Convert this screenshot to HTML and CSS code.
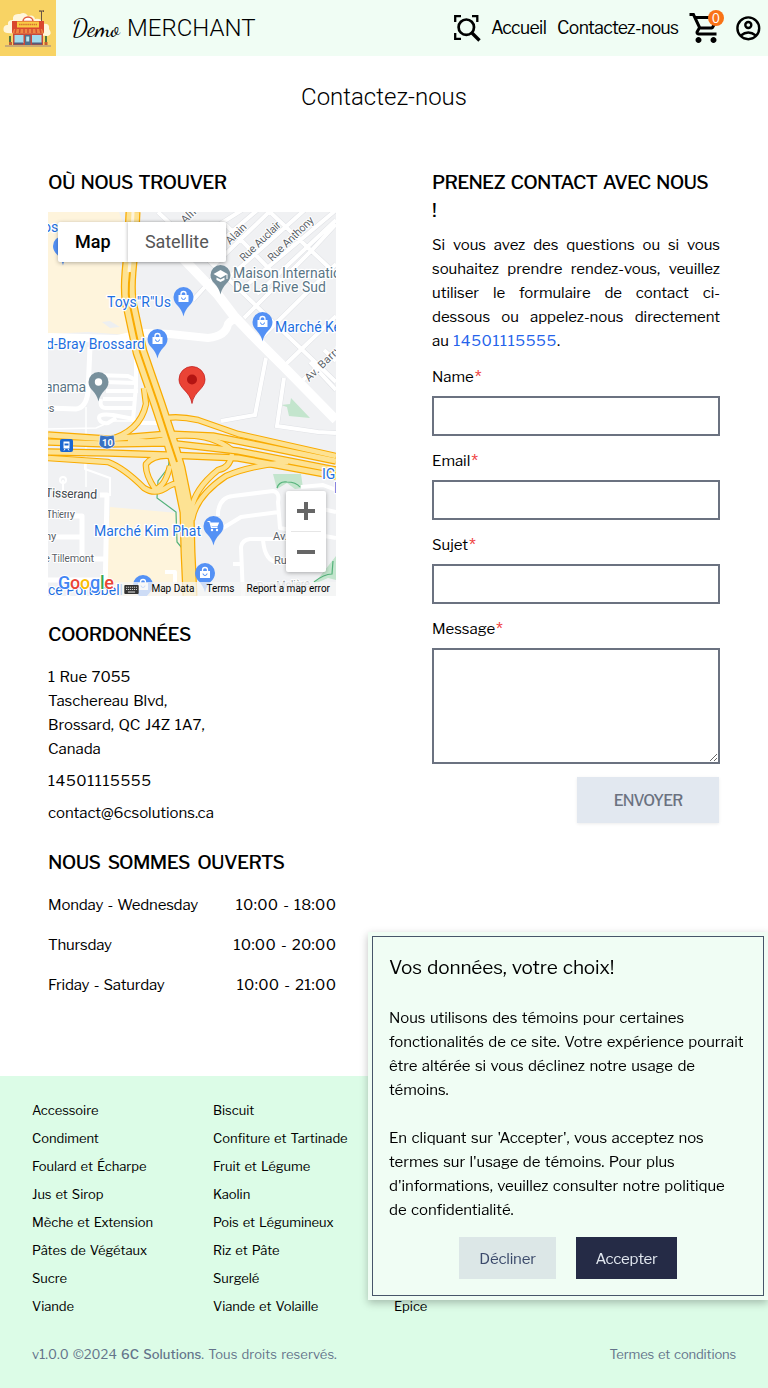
FILE: index.html
```html
<!DOCTYPE html>
<html lang="fr">
<head>
<meta charset="utf-8">
<title>Contactez-nous</title>
<link rel="stylesheet" href="styles.css">
</head>
<body>
<header class="nav">
  <svg class="logo" viewBox="0 0 56 56">
    <rect width="56" height="56" fill="#f8d364"/>
    <path d="M7 33a4 4 0 0 1 1-8q-1-5 5-5-1-7 7-6 5-3 8 2 6-2 7 3 7-1 8 5 7-1 6 5 4 5-1 7z" fill="#fff6dc"/>
    <path d="M41.500 24V11M39 11h5M40 12v-1.500M43.500 12v-1.500" stroke="#6a5444" fill="none"/>
    <path d="M23 21.500a5 4.500 0 0 1 10 0z" fill="#fff" stroke="#e45a3a" stroke-width="1.500"/>
    <path d="M12 21h32v12H12z" fill="#d9472f"/>
    <path d="M17 21.500h22v6H17z" fill="#f9cb45"/>
    <path d="M19 24.500h18" stroke="#d8722e" stroke-width="1.600" stroke-dasharray="1.500 .6"/>
    <path d="M13 45V32h30v13z" fill="#c84a3b"/>
    <path d="M14.500 35h9v8h-9zM32 35h9.500v8H32z" fill="#a3dced"/>
    <path d="M25 35h5.500v10H25z" fill="#4e6f8c"/><path d="M26.200 36.500h3v5h-3z" fill="#b7e6ee"/>
    <path d="M14 29h28l2 4.500H12z" fill="#ee8744"/>
    <path d="M16 29l-1 4M20 29l-.5 4M24 29v4M28 29v4M32 29v4M36 29l.5 4M40 29l1 4" stroke="#d34d31" stroke-width="1.500"/>
    <path d="M10 36v6M46 36v6" stroke="#4e7442" stroke-width="2"/>
    <path d="M9 42h3v3H9zM44.500 42h3v3h-3z" fill="#c45e33"/>
    <path d="M14 42.500h9v2h-9zM32 42.500h10v2H32z" fill="#545d79"/>
    <path d="M5 46h46" stroke="#b99d78" stroke-width="1.500"/>
  </svg>
  <div class="brand"><span class="brand-script">Demo</span><span class="brand-name">MERCHANT</span></div>
  <nav class="menu">
    <svg class="ico-search" viewBox="0 0 28 28" fill="none" stroke="#000" stroke-width="2.300">
      <path d="M2.200 8V2.200H8M19 2.200h5.300V8M2.200 19v5.800H8"/>
      <circle cx="13.300" cy="13.200" r="7.700" stroke-width="2.700"/><path d="M18.500 18.500l8 8" stroke-width="3.300"/>
    </svg>
    <a class="m-home">Accueil</a>
    <a class="m-contact">Contactez-nous</a>
    <div class="cart">
      <svg viewBox="0 0 24 24" width="36" height="36"><path d="M15.550 13c.75 0 1.410-.41 1.750-1.030l3.580-6.490A.996.996 0 0 0 20.010 4H5.210l-.94-2H1v2h2l3.600 7.590-1.350 2.440C4.520 15.370 5.480 17 7 17h12v-2H7l1.100-2h7.450zM6.160 6h12.150l-2.760 5H8.530L6.160 6zM7 18c-1.100 0-1.990.9-1.990 2S5.900 22 7 22s2-.9 2-2-.9-2-2-2zm10 0c-1.100 0-1.990.9-1.990 2s.89 2 1.990 2 2-.9 2-2-.9-2-2-2z"/></svg>
      <span class="badge">0</span>
    </div>
    <svg class="ico-user" viewBox="0 0 28 28" fill="none" stroke="#000" stroke-width="2.400"><circle cx="14.300" cy="14.300" r="10.900"/><circle cx="14.300" cy="11" r="3"/><path d="M6.800 21.500q7.500-6 15 0"/></svg>
  </nav>
</header>

<h1 class="title">Contactez-nous</h1>

<main class="cols">
  <section class="col">
    <h2 class="h h-find">OÙ NOUS TROUVER</h2>
    <div class="map">
      <svg class="map-svg" viewBox="0 0 288 384">
        <defs>
          <path id="streets" d="M110 0L288 170M148 27L210 -12M160 40L240 -28M175 10L195 30L232 68M222 0L288 62M165 54L250 -28M178 68L288 -30M145 88L165 66M200 72L288 -2M209 82L288 8M196 106L262 40L288 12M215 124L288 52M238 152L288 104M255 168L288 138M262 150L288 178M276 138L288 149M120 14L150 46M218 146L207 203 173 209M236 166L229 214 270 220 288 221"/>
          <path id="ramps" d="M60 228Q92 220 98 192L96 176M118 206Q132 204 150 208L190 222 288 244M0 246L60 250Q76 256 96 276Q108 284 121 274Q132 268 134 276M122 254Q117 275 107 277Q97 262 98 252Q106 242 124 244M143 310Q140 282 170 258 182 256 184 242M144 308Q148 284 178 264 200 254 240 250M80 228Q110 232 126 224 160 220 184 238"/>
          <path id="lanes" d="M0 223L60 227 120 222 165 224 210 233 288 249M0 230L60 232 120 231 190 239 288 258M0 240L60 241 120 243 190 246 288 264"/>
          <path id="trunk" d="M85 0Q84 30 81 60 79 84 83 98L92 140 110 192 122 228 130 256 139 300 140 340 142 384"/>
          <path id="pin" d="M0 19.500C-2 9-10 8-10 0A10 10 0 0 1 10 0C10 8 2 9 0 19.500z"/>
          <g id="shop"><use href="#pin" fill="#5491f5"/><path d="M-5-2H5V5H-5z" fill="#fff"/><path d="M-2.500-1v-2a2.500 2.500 0 0 1 5 0v2" fill="none" stroke="#fff" stroke-width="1.300"/><path d="M-2 .5a2 2 0 0 0 4 0" fill="none" stroke="#5491f5"/></g>
        </defs>
        <rect width="288" height="384" fill="#f0f1f3"/>
        <path d="M0 0h71l4 10-3 50 8 63-40-3-40 2z" fill="#fef4dc"/>
        <path d="M62 295l68 6 5 83H57z" fill="#fef4dc"/>
        <path d="M54 110l8-1 10 6-10 1z" fill="#edeff1"/>
        <path d="M243 186l19 20-21-2-2-9-6-2 9-1zM225 262h28l2 14-8 1-8-6-10 6zM266 372l22-28v24l-8-2z" fill="#c3e5cd"/>
        <use href="#streets" fill="none" stroke="#dfe1e5" stroke-width="5"/>
        <use href="#streets" fill="none" stroke="#fff" stroke-width="4"/>
        <g fill="none" stroke="#fff" stroke-linejoin="round">
          <path d="M104 14L170 83 186 104 204 123 236 155 288 208" stroke-width="9.500"/>
          <path d="M0 125L70 127 97 121 122 122 160 126Q178 124 180 112Q184 106 192 108" stroke-width="8"/>
          <path d="M42 135L40 180Q38 196 28 197L0 196" stroke-width="5"/>
          <path d="M38 195v80" stroke-width="1.500"/>
          <path d="M88 147v27L85 208 94 211H112M45 163L80 164 88 168M56 170l32 1M58 179H90M55 187H88M53 187Q51 196 58 196H86M86 207L65 203Q51 201 51 206Q52 212 60 211L68 206" stroke-width="4"/>
          <path d="M0 217L48 216 64 209 88 209" stroke-width="1.500"/>
          <path d="M37 245v12L62 266V284M15 285V268" stroke-width="2"/>
          <circle cx="15" cy="268" r="3" stroke-width="2"/>
          <path d="M52 283H59L57 384M26 304H34V345M8 325H34M45 347H58M0 368H52" stroke-width="5"/>
          <path d="M170 304V300Q172 285 185 284L225 279Q232 280 230 290L232 316 288 326M175 316L193 305 231 300M195 384L193 335Q194 328 202 327H240M215 328Q217 350 230 350M185 352h10M253 275L275 273 288 278M270 296L288 300M117 360H127V378" stroke-width="4"/>
        </g>
        <path d="M114 222L117 234Q123 246 120 256L110 269 109 286 128 300 129 330 134 336M229 276Q231 269 239 270Q248 270 252 275M266 370q10-8 18-8l1-13" fill="none" stroke="#54b27a" stroke-width="1.200"/>
        <g fill="none" stroke-linejoin="round">
          <g stroke="#f9ab00"><use href="#ramps" stroke-width="6.500"/><use href="#lanes" stroke-width="7.500"/><use href="#trunk" stroke-width="15"/></g>
          <g stroke="#fde293"><use href="#ramps" stroke-width="4.400"/><use href="#lanes" stroke-width="5"/><use href="#trunk" stroke-width="12.500"/></g>
          <path d="M82 60Q79 84 83 98L92 140 110 192 121 226 129 250" stroke="#f9ab00" stroke-width="2"/>
          <path d="M85 0Q84 30 81 60" stroke="#fef4dc" stroke-width="3"/>
        </g>
        <g font-family="Roboto, sans-serif" font-size="11" fill="#5b6268" stroke="#fff" stroke-width="2" paint-order="stroke" stroke-linejoin="round">
          <text transform="translate(137 12) rotate(-43)">Alfred</text>
          <text transform="translate(182 33) rotate(-45)">Alain</text>
          <text transform="translate(196 50) rotate(-44)" textLength="52">Rue Auclair</text>
          <text transform="translate(224 50) rotate(-44)" textLength="59">Rue Anthony</text>
          <text transform="translate(261 170) rotate(-44)" textLength="45">Av. Barry</text>
          <text x="-5" y="200">es</text>
          <text x="-3" y="285" font-size="12.500" transform="rotate(2 0 285)" textLength="52" fill="#42474c">Tisserand</text>
          <text x="-2" y="306" textLength="29">Thierry</text><text x="-3" y="328">ny</text><text x="-4" y="350" textLength="50">e Tillemont</text>
          <text x="225" y="328">Av.</text><text x="226" y="352">Ru</text>
          <text x="209" y="378" transform="rotate(-3 209 376)" textLength="53" fill="#9aa0a5">Rue Molière</text>
        </g>
        <g font-family="Roboto, sans-serif" font-size="14" fill="#1e6fe0" stroke="#fff" stroke-width="2.500" paint-order="stroke" stroke-linejoin="round">
          <text x="-5" y="20">os</text>
          <text x="59" y="95" textLength="64">Toys"R"Us</text>
          <text x="-2" y="137" textLength="99">d-Bray Brossard</text>
          <text x="227" y="120" textLength="66">Marché Ke</text>
          <text x="46" y="324" textLength="107">Marché Kim Phat</text>
          <text x="0" y="383" textLength="75">ce Portobell</text>
          <text x="274" y="267">IG</text><text x="286" y="281">E</text>
          <g fill="#5a7585"><text x="185" y="66" textLength="108">Maison Internatio</text><text x="185" y="80" textLength="93">De La Rive Sud</text><text x="-3" y="180" textLength="41">anama</text></g>
        </g>
        <use href="#shop" x="15" y="34"/><use href="#shop" x="135.500" y="85"/><use href="#shop" x="109.500" y="127"/><use href="#shop" x="214.500" y="110"/><use href="#shop" x="157" y="361"/><use href="#shop" x="95" y="373"/>
        <g transform="translate(165.500 314)"><use href="#pin" fill="#5491f5"/><path d="M-6-4.500h2.200L-2 1.500h6" fill="none" stroke="#fff" stroke-width="1.200"/><path d="M-3.300-3.500h9L4 .5h-6z" fill="#fff"/><circle cx="-1.500" cy="4" r="1.200" fill="#fff"/><circle cx="3.500" cy="4" r="1.200" fill="#fff"/></g>
        <g transform="translate(172.500 63)"><use href="#pin" fill="#78909c"/><path d="M-7-1L0-5 7-1 0 3zM-4 2.500v2.500l4 2 4-2V2.500L0 4.500zM6-1h1v5H6z" fill="#fff"/></g>
        <g transform="translate(50.500 170)"><use href="#pin" fill="#78909c"/><circle r="3.700" fill="#fff"/></g>
        <path d="M144 191.500C142 179 131 177 131 167.500a13 13 0 0 1 26 0C157 177 146 179 144 191.500z" fill="#ea4335" stroke="#c5221f" stroke-width=".8"/><circle cx="144" cy="167.500" r="5" fill="#b31412"/>
        <path d="M52 223q7 2 14 0l1 9q-1 4-8 5-7-1-8-5z" fill="#3871c3" stroke="#fff" stroke-width=".6"/>
        <text x="59.500" y="233.500" text-anchor="middle" font-family="Roboto" font-size="9.500" font-weight="700" fill="#fff">10</text>
        <rect x="12" y="227" width="13" height="13" rx="2" fill="#1a66d0"/><path d="M15.500 229.500h6v7h-6z" fill="#fff"/><path d="M16 238.500l1-1.500M21 238.500l-1-1.500" stroke="#fff"/><path d="M16.500 231.500h4v2h-4z" fill="#1a66d0"/>
        <text x="10" y="377" font-family="Roboto" font-size="18" font-weight="500" textLength="56" stroke="#fff" stroke-width="2" paint-order="stroke"><tspan fill="#4285f4">G</tspan><tspan fill="#ea4335">o</tspan><tspan fill="#fbbc04">o</tspan><tspan fill="#4285f4">g</tspan><tspan fill="#34a853">l</tspan><tspan fill="#ea4335">e</tspan></text>
      </svg>
      <div class="map-types"><span class="mt-map">Map</span><span class="mt-sat">Satellite</span></div>
      <div class="zoomer"><svg viewBox="0 0 40 81"><path d="M11 20h18M20 11v18M11 61h18" stroke="#666" stroke-width="4"/><path d="M5 40.500h30" stroke="#e6e6e6"/></svg></div>
      <div class="credits">
        <svg viewBox="0 0 16 10" width="15" height="9"><rect width="16" height="10" rx="1" fill="#333"/><path d="M2 2.500h12M2 5h12" stroke="#ddd" stroke-width="1.200" stroke-dasharray="1.200 1"/><path d="M4 7.800h8" stroke="#ddd" stroke-width="1.200"/></svg>
        <span>Map Data</span><span>Terms</span><span>Report a map error</span>
      </div>
    </div>
    <h2 class="h h-coord">COORDONNÉES</h2>
    <address class="addr"><span>1 Rue 7055</span><br><span>Taschereau Blvd,</span><br><span>Brossard, QC J4Z 1A7,</span><br><span>Canada</span></address>
    <p class="tel digits">14501115555</p>
    <p class="mail">contact@6csolutions.ca</p>
    <h2 class="h h-open">NOUS SOMMES OUVERTS</h2>
    <div class="hours">
      <div><span>Monday - Wednesday</span><span class="hr">10:00 - 18:00</span></div>
      <div><span>Thursday</span><span class="hr">10:00 - 20:00</span></div>
      <div><span>Friday - Saturday</span><span class="hr">10:00 - 21:00</span></div>
    </div>
  </section>

  <section class="col">
    <h2 class="h h-touch">PRENEZ CONTACT AVEC NOUS !</h2>
    <p class="intro">Si vous avez des questions ou si vous souhaitez prendre rendez-vous, veuillez utiliser le formulaire de contact ci-dessous ou appelez-nous directement au&nbsp;<a class="phone digits">14501115555</a>.</p>
    <form class="form">
      <label>Name<i>*</i></label><input type="text">
      <label>Email<i>*</i></label><input type="text">
      <label>Sujet<i>*</i></label><input type="text">
      <label>Message<i>*</i></label><textarea></textarea>
      <button class="send" type="button">ENVOYER</button>
    </form>
  </section>
</main>

<footer class="foot">
  <div class="cats">
    <ul><li>Accessoire</li><li>Condiment</li><li>Foulard et Écharpe</li><li>Jus et Sirop</li><li>Mèche et Extension</li><li>Pâtes de Végétaux</li><li>Sucre</li><li>Viande</li></ul>
    <ul><li>Biscuit</li><li>Confiture et Tartinade</li><li>Fruit et Légume</li><li>Kaolin</li><li>Pois et Légumineux</li><li>Riz et Pâte</li><li>Surgelé</li><li>Viande et Volaille</li></ul>
    <ul class="last"><li>Épice</li></ul>
  </div>
  <div class="legal"><span class="copy">v1.0.0 ©2024 <b>6C Solutions</b>. Tous droits reservés.</span><a class="terms">Termes et conditions</a></div>
</footer>

<aside class="cookie">
  <div class="cookie-in">
    <h3>Vos données, votre choix!</h3>
    <p>Nous utilisons des témoins pour certaines fonctionalités de ce site. Votre expérience pourrait être altérée si vous déclinez notre usage de témoins.</p>
    <p>En cliquant sur 'Accepter', vous acceptez nos termes sur l'usage de témoins. Pour plus d'informations, veuillez consulter notre politique de&nbsp;confidentialité.</p>
    <div class="acts"><button class="no">Décliner</button><button class="yes">Accepter</button></div>
  </div>
</aside>
</body>
</html>
```
FILE: styles.css
```css
* { box-sizing: border-box; margin: 0; padding: 0; }
body { font: 15px/24px "Libre Franklin", "Liberation Sans", Arial, sans-serif; font-variant-numeric: tabular-nums; letter-spacing: -.04px; word-spacing: 1.300px; color: #000; background: #fff; height: 1388px; display: flex; flex-direction: column; overflow: hidden; }
button, input, textarea { font: inherit; letter-spacing: inherit; border-radius: 0; }

.nav { height: 56px; background: #f0fdf4; display: flex; align-items: center; flex: none; }
.logo { width: 56px; height: 56px; }
.brand { margin-left: 16px; display: flex; align-items: baseline; gap: 7px; font-size: 24px; line-height: 32px; letter-spacing: 0; }
.brand-script { font-family: "Dancing Script", "Liberation Serif", cursive; width: 48px; }
.brand-name { font-family: Roboto, sans-serif; font-weight: 300; }
.menu { margin-left: auto; display: flex; align-items: center; padding-right: 6px; font-size: 17.5px; letter-spacing: -.6px; }
.ico-search { width: 28px; height: 28px; margin-right: 10px; }
.m-home { width: 56px; margin-right: 10px; }
.m-contact { width: 121px; white-space: nowrap; }
.cart { position: relative; width: 36px; height: 36px; margin: 0 10px 0 10px; }
.cart svg { display: block; }
.badge { position: absolute; left: 20px; top: 0; width: 16px; height: 16px; border-radius: 50%; background: #f97316; color: #fff; font-size: 12px; line-height: 17px; letter-spacing: 0; text-align: center; }
.ico-user { width: 28px; height: 28px; }

.title { margin-top: 25px; font: 300 24px/32px Roboto, sans-serif; letter-spacing: 0; text-align: center; flex: none; }
.cols { display: grid; grid-template-columns: 288px 288px; gap: 96px; padding: 55px 48px 0; height: 963px; flex: none; }
.h { font-size: 19px; line-height: 30px; height: 28px; font-weight: 500; letter-spacing: -.65px; word-spacing: 2.200px; white-space: nowrap; }
.h-open { word-spacing: 4px; }
.h-touch { height: 56px; line-height: 28px; padding: 1px 6px 0 0; letter-spacing: -.75px; white-space: normal; }

.map { position: relative; width: 288px; height: 384px; margin: 16px 0 24px; overflow: hidden; letter-spacing: 0; word-spacing: 0; }
.map-svg { display: block; width: 288px; height: 384px; }
.map-types { position: absolute; left: 10px; top: 10px; height: 40px; display: flex; font: 18px/40px Roboto, sans-serif; background: #fff; box-shadow: 0 1px 4px rgba(0,0,0,.3); border-radius: 2px; }
.mt-map { width: 70px; padding-left: 17px; font-weight: 500; }
.mt-sat { width: 98px; padding-left: 17px; color: #565656; box-shadow: -1px 0 3px rgba(0,0,0,.2); letter-spacing: -.1px; }
.zoomer { position: absolute; left: 238px; top: 279px; width: 40px; height: 81px; background: #fff; border-radius: 2px; box-shadow: 0 1px 4px rgba(0,0,0,.3); }
.zoomer svg { display: block; }
.credits { position: absolute; right: 0; bottom: 0; height: 14px; padding: 0 6px 0 5px; display: flex; align-items: center; gap: 12px; white-space: nowrap; background: rgba(245,245,245,.75); font: 10px/14px Roboto, sans-serif; }

.addr { font-style: normal; margin-top: 17px; }
.tel, .mail { margin-top: 8px; }
.h-open { margin-top: 23px; }
.hours { display: flex; flex-direction: column; gap: 16px; margin-top: 17px; letter-spacing: -.2px; }
.hours div { display: flex; justify-content: space-between; white-space: nowrap; }
.digits { letter-spacing: .6px; }
.hr { letter-spacing: .3px; margin-right: -.3px; }

.intro { margin-top: 9px; text-align: justify; }
.phone { color: #2563eb; }
.form { display: flex; flex-direction: column; margin-top: 12px; }
.form label { margin-bottom: 7px; height: 24px; }
.form i { font-style: normal; font-size: 18px; line-height: 10px; margin-left: 1px; color: #ef4444; vertical-align: -2px; }
.form input { height: 40px; border: 2px solid #6b7280; margin-bottom: 13px; background: #fff; }
.form textarea { height: 116px; border: 2px solid #6b7280; resize: vertical; }
.send { width: 142px; height: 46px; margin: 13px 1px 0 auto; padding-top: 2px; border: 0; background: #e2e8f0; color: #6b7280; font-size: 15.5px; letter-spacing: -.8px; font-weight: 500; box-shadow: 0 1px 3px rgba(0,0,0,.08); }

.foot { flex: none; height: 312px; background: #dcfce7; padding: 20px 32px 0; }
.cats { display: grid; grid-template-columns: repeat(4, 161px); gap: 20px; font-size: 13px; line-height: 28px; letter-spacing: -.05px; white-space: nowrap; }
.cats ul { list-style: none; }
.last { align-self: end; }
.legal { display: flex; justify-content: space-between; margin-top: 22px; font-size: 13px; line-height: 24px; color: #64748b; }
.copy { letter-spacing: .05px; }
.terms { letter-spacing: -.15px; }
.legal b { font-weight: 500; }

.cookie { position: fixed; left: 368px; top: 932px; width: 400px; height: 368px; padding: 4px; background: #f0fdf4; box-shadow: 0 3px 8px rgba(0,0,0,.25); }
.cookie-in { height: 360px; border: 1px solid #475569; padding: 17px 16px 0; }
.cookie h3 { font-size: 19px; line-height: 28px; font-weight: 400; letter-spacing: -.15px; }
.cookie p { margin-top: 24px; letter-spacing: -.06px; }
.acts { display: flex; justify-content: center; gap: 20px; margin-top: 15px; }
.acts button { height: 42px; padding-top: 2px; border: 0; font-size: 15px; letter-spacing: -.2px; }
.no { width: 97px; background: #dce7e7; color: #3b4a6b; }
.yes { width: 101px; background: #252b46; color: #e2e8f0; }
```
